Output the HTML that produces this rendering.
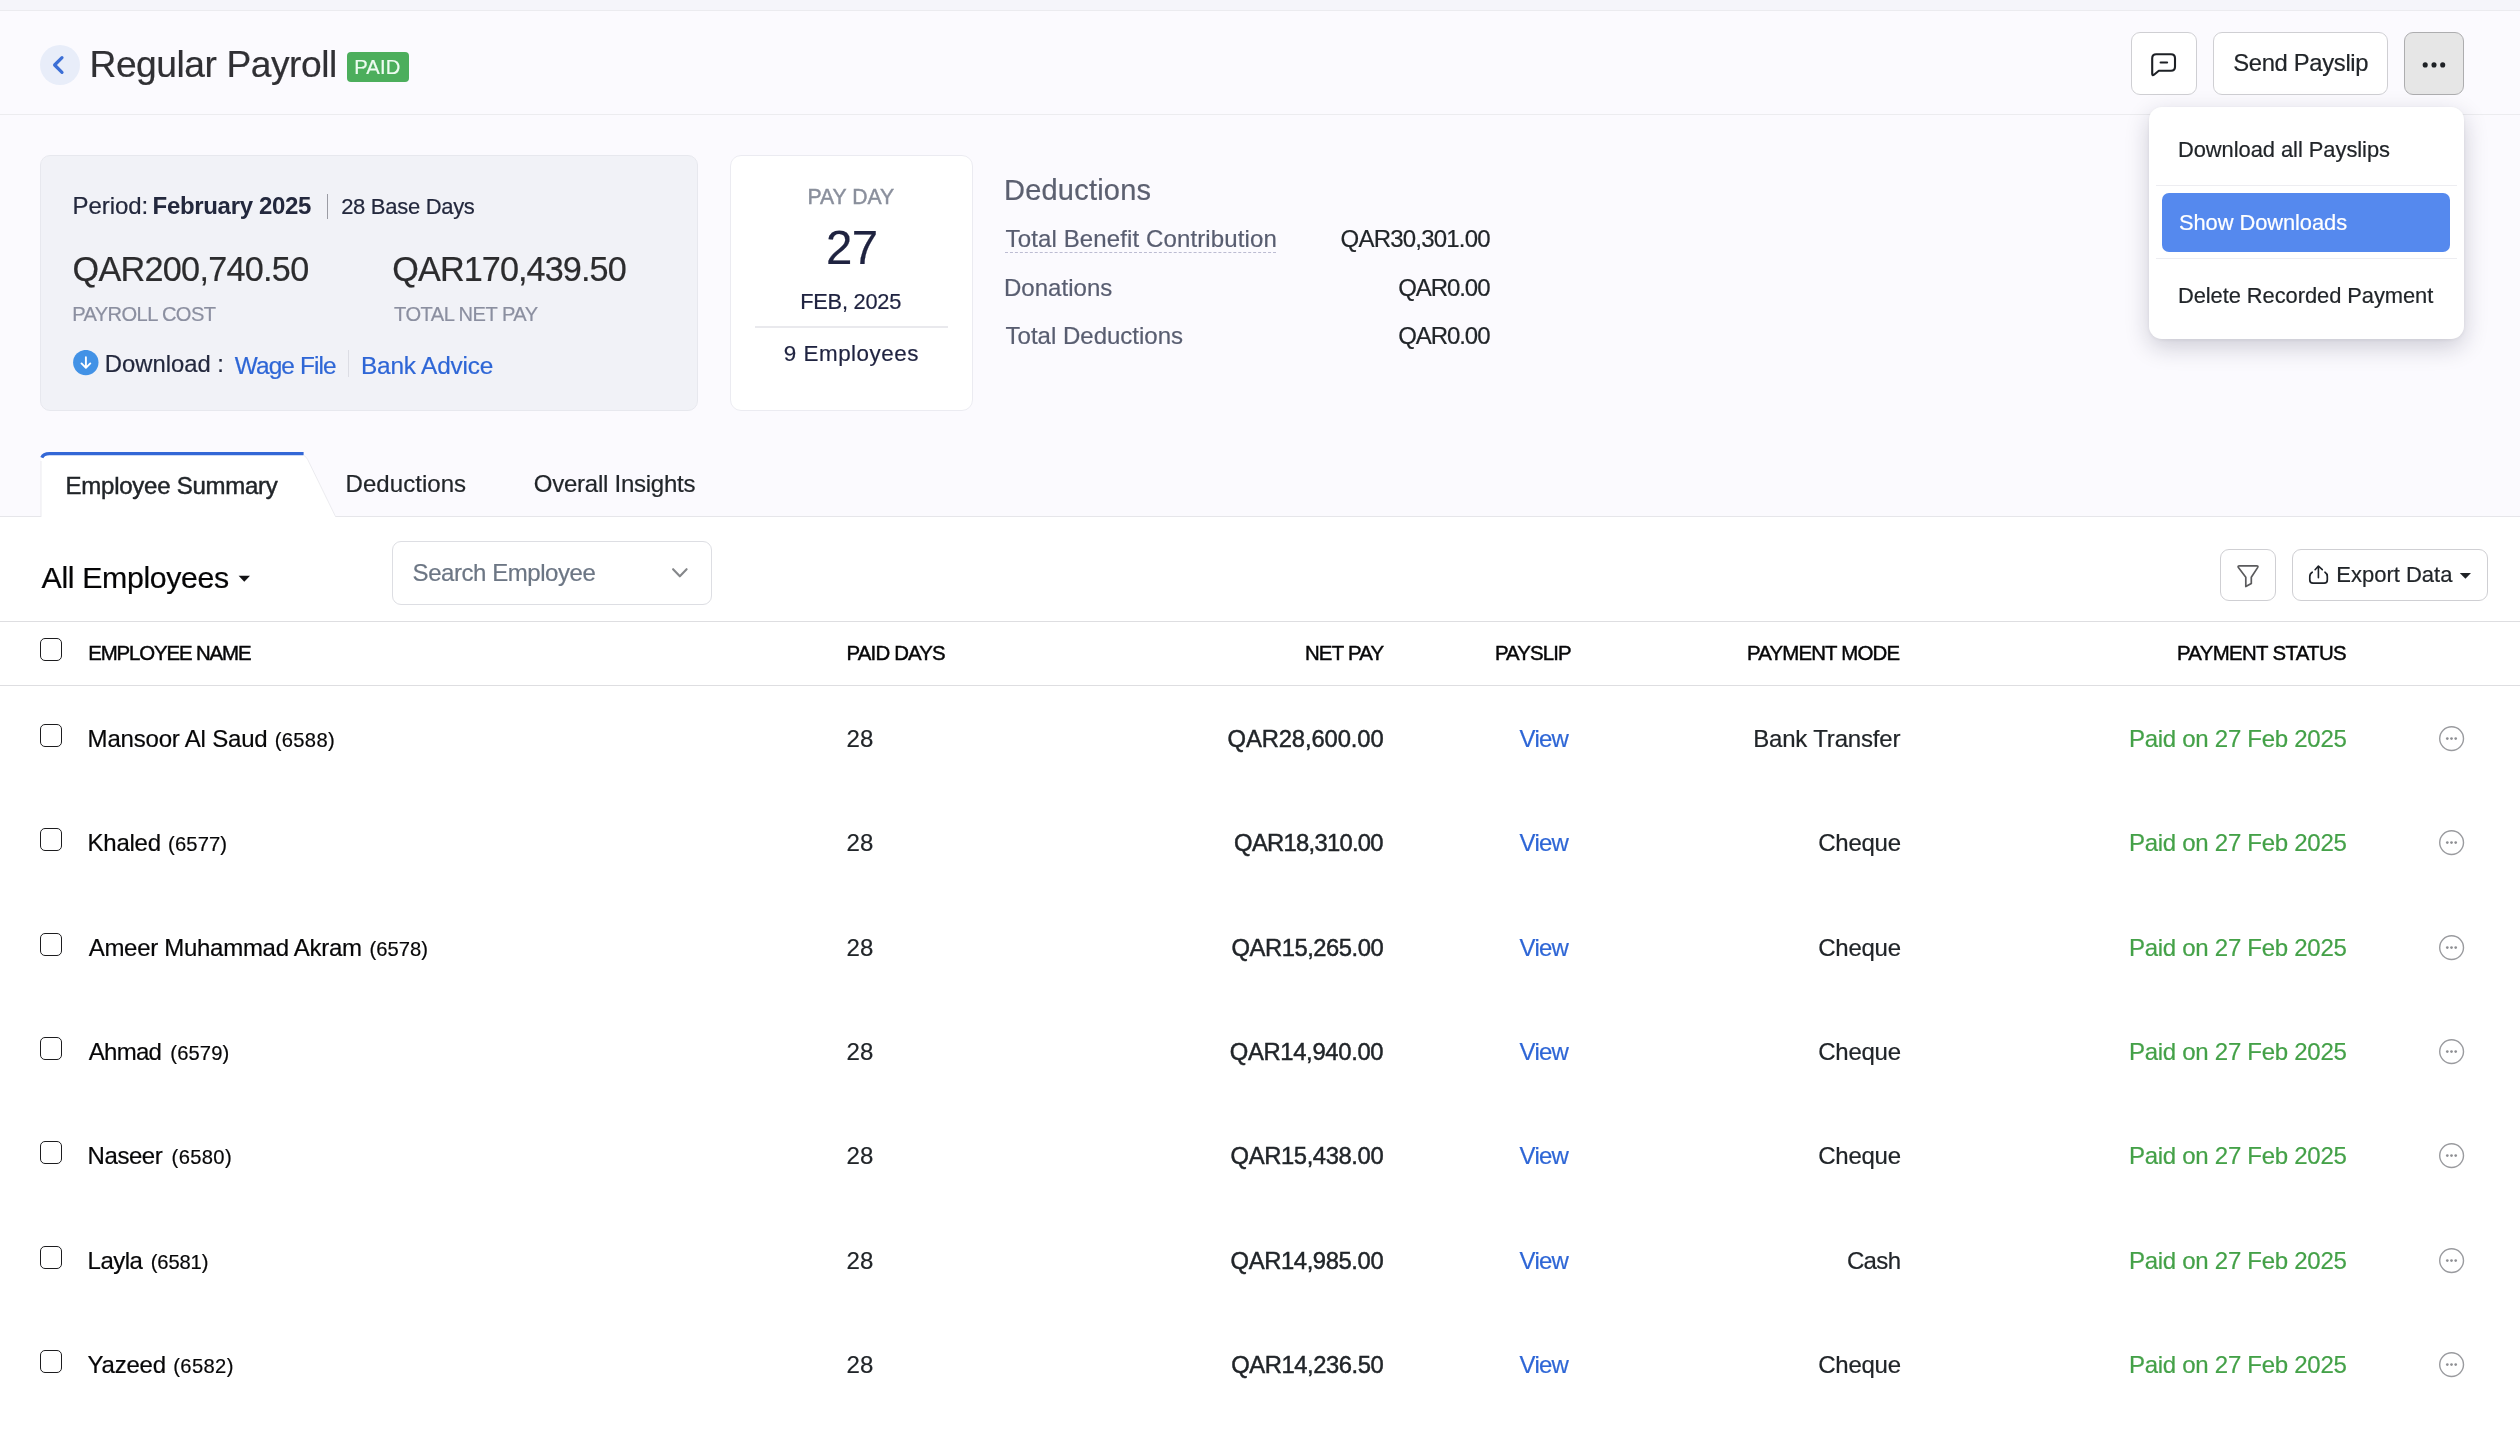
<!DOCTYPE html>
<html lang="en"><head><meta charset="utf-8"><title>Regular Payroll</title>
<style>
*{box-sizing:border-box;margin:0;padding:0}
html,body{width:2520px;height:1436px;overflow:hidden}
body{position:relative;background:#fbfafe;font-family:"Liberation Sans",sans-serif;color:#212529}
.page{position:absolute;left:0;top:0;width:2520px;height:1436px;will-change:transform}
.abs,.t{position:absolute}
.t{white-space:pre;line-height:1;text-decoration:none;display:block;-webkit-text-stroke:0.2px currentColor}
.m{-webkit-text-stroke:0.45px currentColor}
.topstrip{left:0;top:0;width:2520px;height:11px;background:#f5f5fa;border-bottom:1px solid #ebebef}
header{position:absolute;left:0;top:11px;width:2520px;height:104px;border-bottom:1px solid #ececef}
.back{left:40px;top:34px;width:40px;height:40px;border-radius:50%;background:#e8edf9}
.badge{left:347px;top:41px;width:62px;height:30px;border-radius:4px;background:#4cae5c}
.btn{border:1px solid #cfcfd3;border-radius:9px;background:#fff}
.btn.on{background:#e6e6e6;border-color:#adadaf}
.card{left:40px;top:155px;width:658px;height:256px;border:1px solid #e7e8ee;border-radius:10px;background:#f1f2f7}
.payday{left:730px;top:155px;width:243px;height:256px;border:1px solid #ebebf1;border-radius:11px;background:#fff}
.vr{width:1px}
.hr{height:1px}
.menu{left:2149px;top:107px;width:315px;height:232px;border-radius:13px;background:#fff;box-shadow:0 8px 24px rgba(20,20,50,.20),0 1px 4px rgba(20,20,50,.06)}
.menu .hl{left:13px;top:86px;width:288px;height:59px;border-radius:7px;background:#5589ee}
.menu .sep{left:7px;width:301px;height:1px;background:#ededf1}
.tabs{left:0;top:440px;width:2520px;height:77px;border-bottom:1px solid #e6e6ea}
.panel{left:0;top:517px;width:2520px;height:919px;background:#fff}
.search{left:392px;top:24px;width:320px;height:64px;border:1px solid #dddee3;border-radius:9px;background:#fff}
table{position:absolute;left:0;top:104px;width:2520px;table-layout:fixed;border-collapse:separate;border-spacing:0}
thead th{height:65px;border-top:1px solid #dedee1;border-bottom:1px solid #dedee1}
tbody tr{height:104.33px}
td,th{position:relative;padding:0;font-weight:400}
.cb{position:absolute;left:40px;width:22px;height:23px;border:1.4px solid #1d1d1f;border-radius:5px;background:#fff}
.dots{position:absolute;left:39px;width:26px;height:26px}
</style></head>
<body>
<div class="page">
<div class="abs topstrip"></div>
<header>
<div class="abs back"><svg width="40" height="40" viewBox="0 0 40 40"><path d="M22 12.6 L14.6 20 L22 27.4" fill="none" stroke="#3c6fd6" stroke-width="3.2" stroke-linecap="round" stroke-linejoin="round"/></svg></div>
<span class="t" style="left:89.5px;top:35px;font-size:37.2px;letter-spacing:-0.46px;color:#303034;">Regular Payroll</span>
<div class="abs badge"><span class="t" style="left:7.2px;top:5px;font-size:20.2px;letter-spacing:0.17px;color:#eefcf1;">PAID</span></div>
<div class="abs btn" style="left:2131px;top:21px;width:66px;height:63px"><svg class="abs" style="left:18px;top:19px" width="30" height="28" viewBox="0 0 30 28"><path d="M6.2 2.2 H21 Q25 2.2 25 6.2 V14.8 Q25 18.8 21 18.8 H8.8 L4 22.7 Q2.2 24 2.2 21.8 V6.2 Q2.2 2.2 6.2 2.2 Z" fill="none" stroke="#1d2025" stroke-width="2.1" stroke-linejoin="round"/><path d="M10.6 10.5 H17.1" stroke="#1d2025" stroke-width="2.1" stroke-linecap="round"/></svg></div>
<div class="abs btn" style="left:2213px;top:21px;width:175px;height:63px"><span class="t" style="left:19.2px;top:18px;font-size:23.8px;letter-spacing:-0.32px;color:#212529;">Send Payslip</span></div>
<div class="abs btn on" style="left:2404px;top:21px;width:60px;height:63px"><svg class="abs" style="left:0;top:0" width="58" height="61" viewBox="0 0 58 61"><g fill="#1f2226"><circle cx="20.2" cy="31.9" r="2.55"/><circle cx="29" cy="31.9" r="2.55"/><circle cx="37.7" cy="31.9" r="2.55"/></g></svg></div>
</header>
<section class="abs card">
<span class="t" style="left:31.6px;top:38px;font-size:24px;letter-spacing:-0.07px;color:#23283d;">Period:</span><span class="t" style="left:111.6px;top:38px;font-size:24px;letter-spacing:-0.33px;color:#23283d;font-weight:700;-webkit-text-stroke:0;">February 2025</span>
<div class="abs vr" style="left:286px;top:38px;height:25px;background:#9b9ca4"></div>
<span class="t" style="left:300.2px;top:40px;font-size:22px;letter-spacing:-0.30px;color:#23283d;">28 Base Days</span>
<span class="t" style="left:31.6px;top:96px;font-size:34.2px;letter-spacing:-0.72px;color:#2c2c2e;">QAR200,740.50</span><span class="t" style="left:351.3px;top:96px;font-size:34.2px;letter-spacing:-0.90px;color:#2c2c2e;">QAR170,439.50</span><span class="t" style="left:31.2px;top:148px;font-size:20.1px;letter-spacing:-0.60px;color:#8b8fa0;">PAYROLL COST</span><span class="t" style="left:353.0px;top:148px;font-size:20.1px;letter-spacing:-0.52px;color:#8b8fa0;">TOTAL NET PAY</span>
<svg class="abs" style="left:32px;top:194px" width="26" height="26" viewBox="0 0 26 26"><circle cx="12.8" cy="12.6" r="12.7" fill="#4292e6"/><path d="M12.9 7.2 V17.4 M8.5 13.4 L12.9 17.8 L17.3 13.4" fill="none" stroke="#fff" stroke-width="1.9" stroke-linecap="round" stroke-linejoin="round"/></svg>
<span class="t" style="left:63.8px;top:196px;font-size:23.8px;letter-spacing:0.00px;color:#23283d;">Download :</span><a class="t" style="left:193.8px;top:198px;font-size:24.4px;letter-spacing:-0.89px;color:#2e66d6;">Wage File</a>
<div class="abs vr" style="left:307px;top:194px;height:27px;background:#dcdde4"></div>
<a class="t" style="left:320.0px;top:198px;font-size:24.4px;letter-spacing:-0.18px;color:#2e66d6;">Bank Advice</a>
</section>
<section class="abs payday">
<span class="t m" style="left:76.4px;top:30px;font-size:21.2px;letter-spacing:0.02px;color:#8a8f9c;">PAY DAY</span><span class="t" style="left:95.0px;top:68px;font-size:47.4px;letter-spacing:-0.50px;color:#1f2340;">27</span><span class="t" style="left:69.2px;top:135px;font-size:21.8px;letter-spacing:-0.23px;color:#1f2340;">FEB, 2025</span>
<div class="abs hr" style="left:24px;top:170px;width:193px;height:2px;background:#e9e9ed"></div>
<span class="t" style="left:52.8px;top:187px;font-size:22.4px;letter-spacing:0.52px;color:#1f2340;">9 Employees</span>
</section>
<section class="abs" style="left:1005px;top:170px;width:490px;height:190px">
<span class="t" style="left:-1.0px;top:6px;font-size:29px;letter-spacing:0.22px;color:#5c6070;">Deductions</span>
<span class="t" style="left:0.6px;top:57px;font-size:24px;letter-spacing:0.12px;color:#585d70;">Total Benefit Contribution</span><span class="t" style="left:335.6px;top:57px;font-size:24px;letter-spacing:-0.80px;color:#212529;">QAR30,301.00</span>
<div class="abs" style="left:0;top:81.5px;width:271px;height:0;border-top:1.5px dashed #bcbcd2"></div>
<span class="t" style="left:-1.0px;top:106px;font-size:24px;letter-spacing:0.03px;color:#585d70;">Donations</span><span class="t" style="left:393.2px;top:106px;font-size:24px;letter-spacing:-1.07px;color:#212529;">QAR0.00</span><span class="t" style="left:0.6px;top:154px;font-size:24px;letter-spacing:-0.00px;color:#585d70;">Total Deductions</span><span class="t" style="left:393.2px;top:154px;font-size:24px;letter-spacing:-1.07px;color:#212529;">QAR0.00</span>
</section>
<nav class="abs tabs">
<svg class="abs" style="left:36px;top:8px" width="310" height="72" viewBox="0 0 310 72"><path d="M5 69.5 V13 Q5 5.5 12.5 5.5 H262 Q268.5 5.5 271.5 11.5 L300 69.5 Z" fill="#fff"/><path d="M5 69.5 V13 M268 7.5 Q270.5 9 271.8 11.8 L300.5 70.5" fill="none" stroke="#ebebef" stroke-width="1"/><path d="M5.8 9.6 Q7.4 5.6 13.5 5.6 H267.6" fill="none" stroke="#3367d6" stroke-width="3.2"/></svg>
<span class="t m" style="left:65.6px;top:34px;font-size:24px;letter-spacing:-0.26px;color:#212529;">Employee Summary</span><span class="t" style="left:345.6px;top:32px;font-size:24px;letter-spacing:0.04px;color:#212529;">Deductions</span><span class="t" style="left:533.8px;top:32px;font-size:24px;letter-spacing:-0.25px;color:#212529;">Overall Insights</span>
</nav>
<main class="abs panel">
<span class="t" style="left:41.6px;top:46px;font-size:30.3px;letter-spacing:-0.36px;color:#050506;">All Employees</span>
<svg class="abs" style="left:238px;top:58.299999999999955px" width="13" height="8" viewBox="0 0 13 8"><path d="M0.6 0.8 H12 L6.3 6.8 Z" fill="#121214"/></svg>
<div class="abs search"><span class="t" style="left:19.6px;top:19px;font-size:24px;letter-spacing:-0.45px;color:#6c7684;">Search Employee</span><svg class="abs" style="left:276px;top:23px" width="22" height="16" viewBox="0 0 22 16"><path d="M4.1 4.2 L10.85 11.3 L17.6 4.2" fill="none" stroke="#85878a" stroke-width="2.1" stroke-linecap="round" stroke-linejoin="round"/></svg></div>
<div class="abs btn" style="left:2220px;top:32px;width:56px;height:52px"><svg class="abs" style="left:14px;top:13px" width="28" height="28" viewBox="0 0 28 28"><path d="M4.6 2.8 H21.6 Q23.6 2.8 22.6 4.6 L16.3 14.2 V20.4 L10.8 23.6 V14.2 L3.4 4.6 Q2.4 2.8 4.6 2.8 Z" fill="none" stroke="#5a5a5c" stroke-width="1.7" stroke-linejoin="round"/></svg></div>
<div class="abs btn" style="left:2292px;top:32px;width:196px;height:52px"><svg class="abs" style="left:15px;top:14px" width="22" height="22" viewBox="0 0 22 22"><path d="M4.2 8.2 Q1.8 9.5 1.8 12.5 V16 Q1.8 19.2 5 19.2 H16.2 Q19.3 19.2 19.3 16 V12.5 Q19.3 9.5 17 8.2" fill="none" stroke="#1e2228" stroke-width="1.7" stroke-linecap="round"/><path d="M10.4 13.7 V2.2 M7.1 5.7 L10.4 2 L14.3 5.7" fill="none" stroke="#1e2228" stroke-width="1.6" stroke-linecap="round" stroke-linejoin="round"/></svg><span class="t" style="left:43.3px;top:14px;font-size:22px;letter-spacing:-0.01px;color:#212529;">Export Data</span><svg class="abs" style="left:166px;top:22px" width="13" height="8" viewBox="0 0 13 8"><path d="M0.8 1 H12 L6.4 6.8 Z" fill="#1f2226"/></svg></div>
<table><colgroup><col style="width:800px"><col style="width:300px"><col style="width:330px"><col style="width:190px"><col style="width:330px"><col style="width:450px"><col style="width:120px"></colgroup><thead><tr>
<th><span class="cb" style="top:16px"></span><span class="t m" style="left:88.2px;top:21px;font-size:20.4px;letter-spacing:-1.12px;color:#070708;">EMPLOYEE NAME</span></th>
<th><span class="t m" style="left:46.6px;top:21px;font-size:20.4px;letter-spacing:-0.83px;color:#070708;">PAID DAYS</span></th>
<th><span class="t m" style="left:204.9px;top:21px;font-size:20.4px;letter-spacing:-0.77px;color:#070708;">NET PAY</span></th>
<th><span class="t m" style="left:64.9px;top:21px;font-size:20.4px;letter-spacing:-0.87px;color:#070708;">PAYSLIP</span></th>
<th><span class="t m" style="left:126.9px;top:21px;font-size:20.4px;letter-spacing:-0.81px;color:#070708;">PAYMENT MODE</span></th>
<th><span class="t m" style="left:226.9px;top:21px;font-size:20.4px;letter-spacing:-0.66px;color:#070708;">PAYMENT STATUS</span></th>
<th></th>
</tr></thead><tbody>
<tr><td><span class="cb" style="top:37.9px"></span><span class="t" style="left:87.6px;top:41px;font-size:24px;letter-spacing:-0.19px;color:#070708;">Mansoor Al Saud</span><span class="t" style="left:274.8px;top:44px;font-size:20.2px;letter-spacing:0.30px;color:#070708;">(6588)</span></td><td><span class="t" style="left:46.6px;top:41px;font-size:24.0px;letter-spacing:0.10px;color:#212529;">28</span></td><td><span class="t m" style="left:127.5px;top:41px;font-size:23.8px;letter-spacing:-0.12px;color:#212529;">QAR28,600.00</span></td><td><a class="t" style="left:89.6px;top:41px;font-size:24px;letter-spacing:-0.77px;color:#2e66d6;">View</a></td><td><span class="t" style="left:133.2px;top:41px;font-size:24px;letter-spacing:-0.18px;color:#212529;">Bank Transfer</span></td><td><span class="t" style="left:179.0px;top:41px;font-size:24px;letter-spacing:-0.28px;color:#44a148;">Paid on 27 Feb 2025</span></td><td><svg class="dots" style="top:39.9px" viewBox="0 0 26 26"><circle cx="12.6" cy="12.6" r="11.9" fill="none" stroke="#9a9b9f" stroke-width="1.4"/><g fill="#8e8f93"><circle cx="8.3" cy="12.6" r="1.35"/><circle cx="12.5" cy="12.6" r="1.35"/><circle cx="16.7" cy="12.6" r="1.35"/></g></svg></td></tr>
<tr><td><span class="cb" style="top:37.9px"></span><span class="t" style="left:87.6px;top:41px;font-size:24px;letter-spacing:-0.26px;color:#070708;">Khaled</span><span class="t" style="left:168.1px;top:44px;font-size:20.2px;letter-spacing:0.12px;color:#070708;">(6577)</span></td><td><span class="t" style="left:46.6px;top:41px;font-size:24.0px;letter-spacing:0.10px;color:#212529;">28</span></td><td><span class="t m" style="left:134.1px;top:41px;font-size:23.8px;letter-spacing:-0.72px;color:#212529;">QAR18,310.00</span></td><td><a class="t" style="left:89.6px;top:41px;font-size:24px;letter-spacing:-0.77px;color:#2e66d6;">View</a></td><td><span class="t" style="left:198.2px;top:41px;font-size:24px;letter-spacing:-0.24px;color:#212529;">Cheque</span></td><td><span class="t" style="left:179.0px;top:41px;font-size:24px;letter-spacing:-0.28px;color:#44a148;">Paid on 27 Feb 2025</span></td><td><svg class="dots" style="top:39.9px" viewBox="0 0 26 26"><circle cx="12.6" cy="12.6" r="11.9" fill="none" stroke="#9a9b9f" stroke-width="1.4"/><g fill="#8e8f93"><circle cx="8.3" cy="12.6" r="1.35"/><circle cx="12.5" cy="12.6" r="1.35"/><circle cx="16.7" cy="12.6" r="1.35"/></g></svg></td></tr>
<tr><td><span class="cb" style="top:37.9px"></span><span class="t" style="left:88.7px;top:41px;font-size:24px;letter-spacing:-0.29px;color:#070708;">Ameer Muhammad Akram</span><span class="t" style="left:369.4px;top:44px;font-size:20.2px;letter-spacing:0.06px;color:#070708;">(6578)</span></td><td><span class="t" style="left:46.6px;top:41px;font-size:24.0px;letter-spacing:0.10px;color:#212529;">28</span></td><td><span class="t m" style="left:131.5px;top:41px;font-size:23.8px;letter-spacing:-0.48px;color:#212529;">QAR15,265.00</span></td><td><a class="t" style="left:89.6px;top:41px;font-size:24px;letter-spacing:-0.77px;color:#2e66d6;">View</a></td><td><span class="t" style="left:198.2px;top:41px;font-size:24px;letter-spacing:-0.24px;color:#212529;">Cheque</span></td><td><span class="t" style="left:179.0px;top:41px;font-size:24px;letter-spacing:-0.28px;color:#44a148;">Paid on 27 Feb 2025</span></td><td><svg class="dots" style="top:39.9px" viewBox="0 0 26 26"><circle cx="12.6" cy="12.6" r="11.9" fill="none" stroke="#9a9b9f" stroke-width="1.4"/><g fill="#8e8f93"><circle cx="8.3" cy="12.6" r="1.35"/><circle cx="12.5" cy="12.6" r="1.35"/><circle cx="16.7" cy="12.6" r="1.35"/></g></svg></td></tr>
<tr><td><span class="cb" style="top:37.9px"></span><span class="t" style="left:88.7px;top:41px;font-size:24px;letter-spacing:-0.70px;color:#070708;">Ahmad</span><span class="t" style="left:170.3px;top:44px;font-size:20.2px;letter-spacing:0.12px;color:#070708;">(6579)</span></td><td><span class="t" style="left:46.6px;top:41px;font-size:24.0px;letter-spacing:0.10px;color:#212529;">28</span></td><td><span class="t m" style="left:129.7px;top:41px;font-size:23.8px;letter-spacing:-0.32px;color:#212529;">QAR14,940.00</span></td><td><a class="t" style="left:89.6px;top:41px;font-size:24px;letter-spacing:-0.77px;color:#2e66d6;">View</a></td><td><span class="t" style="left:198.2px;top:41px;font-size:24px;letter-spacing:-0.24px;color:#212529;">Cheque</span></td><td><span class="t" style="left:179.0px;top:41px;font-size:24px;letter-spacing:-0.28px;color:#44a148;">Paid on 27 Feb 2025</span></td><td><svg class="dots" style="top:39.9px" viewBox="0 0 26 26"><circle cx="12.6" cy="12.6" r="11.9" fill="none" stroke="#9a9b9f" stroke-width="1.4"/><g fill="#8e8f93"><circle cx="8.3" cy="12.6" r="1.35"/><circle cx="12.5" cy="12.6" r="1.35"/><circle cx="16.7" cy="12.6" r="1.35"/></g></svg></td></tr>
<tr><td><span class="cb" style="top:37.9px"></span><span class="t" style="left:87.6px;top:41px;font-size:24px;letter-spacing:-0.44px;color:#070708;">Naseer</span><span class="t" style="left:171.6px;top:44px;font-size:20.2px;letter-spacing:0.34px;color:#070708;">(6580)</span></td><td><span class="t" style="left:46.6px;top:41px;font-size:24.0px;letter-spacing:0.10px;color:#212529;">28</span></td><td><span class="t m" style="left:130.6px;top:41px;font-size:23.8px;letter-spacing:-0.40px;color:#212529;">QAR15,438.00</span></td><td><a class="t" style="left:89.6px;top:41px;font-size:24px;letter-spacing:-0.77px;color:#2e66d6;">View</a></td><td><span class="t" style="left:198.2px;top:41px;font-size:24px;letter-spacing:-0.24px;color:#212529;">Cheque</span></td><td><span class="t" style="left:179.0px;top:41px;font-size:24px;letter-spacing:-0.28px;color:#44a148;">Paid on 27 Feb 2025</span></td><td><svg class="dots" style="top:39.9px" viewBox="0 0 26 26"><circle cx="12.6" cy="12.6" r="11.9" fill="none" stroke="#9a9b9f" stroke-width="1.4"/><g fill="#8e8f93"><circle cx="8.3" cy="12.6" r="1.35"/><circle cx="12.5" cy="12.6" r="1.35"/><circle cx="16.7" cy="12.6" r="1.35"/></g></svg></td></tr>
<tr><td><span class="cb" style="top:37.9px"></span><span class="t" style="left:87.6px;top:41px;font-size:24px;letter-spacing:-0.52px;color:#070708;">Layla</span><span class="t" style="left:150.8px;top:44px;font-size:20.2px;letter-spacing:-0.16px;color:#070708;">(6581)</span></td><td><span class="t" style="left:46.6px;top:41px;font-size:24.0px;letter-spacing:0.10px;color:#212529;">28</span></td><td><span class="t m" style="left:130.6px;top:41px;font-size:23.8px;letter-spacing:-0.40px;color:#212529;">QAR14,985.00</span></td><td><a class="t" style="left:89.6px;top:41px;font-size:24px;letter-spacing:-0.77px;color:#2e66d6;">View</a></td><td><span class="t" style="left:226.9px;top:41px;font-size:24px;letter-spacing:-0.63px;color:#212529;">Cash</span></td><td><span class="t" style="left:179.0px;top:41px;font-size:24px;letter-spacing:-0.28px;color:#44a148;">Paid on 27 Feb 2025</span></td><td><svg class="dots" style="top:39.9px" viewBox="0 0 26 26"><circle cx="12.6" cy="12.6" r="11.9" fill="none" stroke="#9a9b9f" stroke-width="1.4"/><g fill="#8e8f93"><circle cx="8.3" cy="12.6" r="1.35"/><circle cx="12.5" cy="12.6" r="1.35"/><circle cx="16.7" cy="12.6" r="1.35"/></g></svg></td></tr>
<tr><td><span class="cb" style="top:37.9px"></span><span class="t" style="left:87.5px;top:41px;font-size:24px;letter-spacing:-0.20px;color:#070708;">Yazeed</span><span class="t" style="left:173.3px;top:44px;font-size:20.2px;letter-spacing:0.34px;color:#070708;">(6582)</span></td><td><span class="t" style="left:46.6px;top:41px;font-size:24.0px;letter-spacing:0.10px;color:#212529;">28</span></td><td><span class="t m" style="left:131.3px;top:41px;font-size:23.8px;letter-spacing:-0.46px;color:#212529;">QAR14,236.50</span></td><td><a class="t" style="left:89.6px;top:41px;font-size:24px;letter-spacing:-0.77px;color:#2e66d6;">View</a></td><td><span class="t" style="left:198.2px;top:41px;font-size:24px;letter-spacing:-0.24px;color:#212529;">Cheque</span></td><td><span class="t" style="left:179.0px;top:41px;font-size:24px;letter-spacing:-0.28px;color:#44a148;">Paid on 27 Feb 2025</span></td><td><svg class="dots" style="top:39.9px" viewBox="0 0 26 26"><circle cx="12.6" cy="12.6" r="11.9" fill="none" stroke="#9a9b9f" stroke-width="1.4"/><g fill="#8e8f93"><circle cx="8.3" cy="12.6" r="1.35"/><circle cx="12.5" cy="12.6" r="1.35"/><circle cx="16.7" cy="12.6" r="1.35"/></g></svg></td></tr>
</tbody></table>
</main>
<div class="abs menu">
<span class="t" style="left:28.9px;top:32px;font-size:21.9px;letter-spacing:-0.04px;color:#212529;">Download all Payslips</span>
<div class="abs sep" style="top:78px"></div>
<div class="abs hl"></div><span class="t" style="left:30.0px;top:105px;font-size:21.9px;letter-spacing:-0.08px;color:#ffffff;">Show Downloads</span>
<div class="abs sep" style="top:151px"></div>
<span class="t" style="left:28.9px;top:178px;font-size:21.9px;letter-spacing:-0.06px;color:#212529;">Delete Recorded Payment</span>
</div>
</div>
</body></html>
